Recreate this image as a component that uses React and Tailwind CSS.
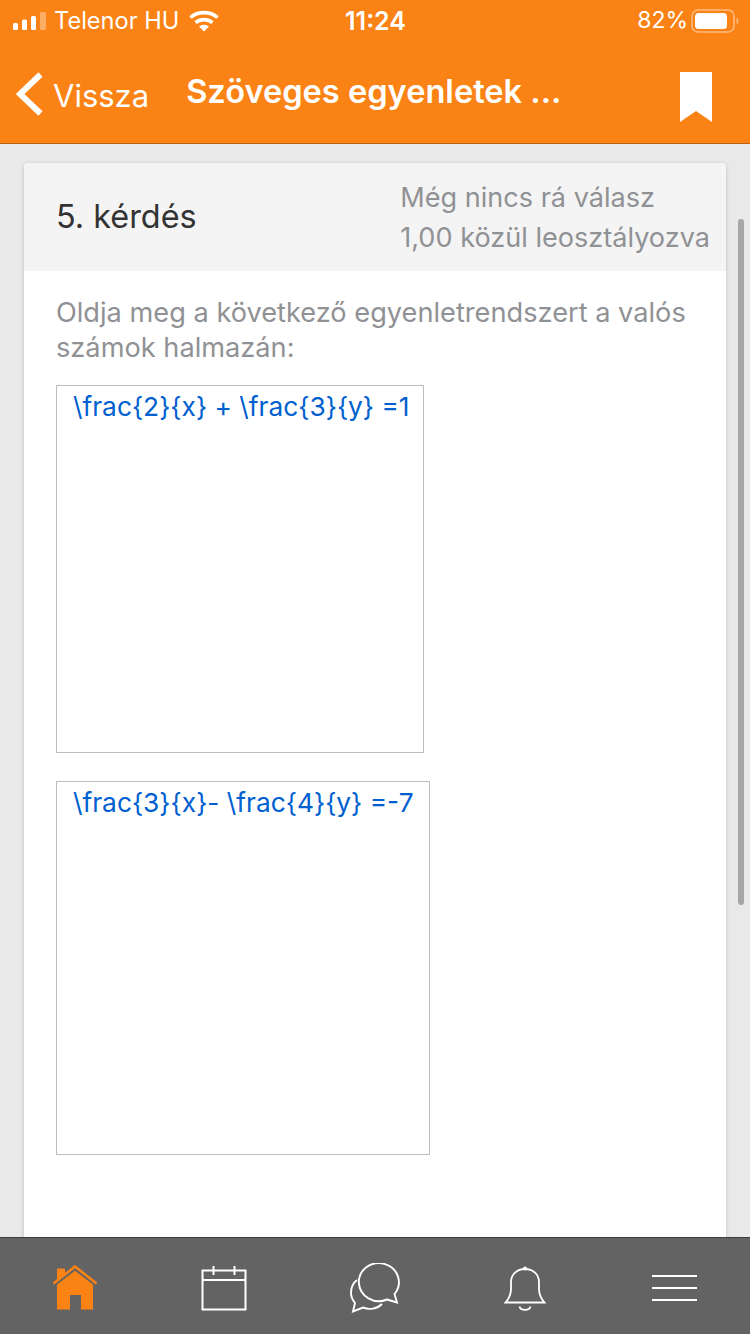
const font = { fontFamily: "Inter, 'Noto Sans', sans-serif" };

function Signal() {
  return (
    <svg width="34" height="18" viewBox="0 0 34 18" fill="#fff">
      <rect x="0" y="11" width="5" height="7" rx="1.5" />
      <rect x="9" y="7.5" width="5" height="10.5" rx="1.5" />
      <rect x="18" y="4" width="5" height="14" rx="1.5" />
      <rect x="27" y="0" width="6" height="18" rx="1.5" opacity="0.35" />
    </svg>
  );
}

function Wifi() {
  return (
    <svg width="30" height="22" viewBox="0 0 30 22" fill="none" stroke="#fff" strokeWidth="3.6">
      <path d="M1.500 7.500C9 1 21 1 28.500 7.500" />
      <path d="M6.500 12.600C11.500 8.600 18.500 8.600 23.500 12.600" />
      <path d="M15 21.500l-5-5c3-2.200 7-2.200 10 0z" fill="#fff" stroke="none" />
    </svg>
  );
}

function Battery() {
  return (
    <svg width="48" height="24" viewBox="0 0 48 24" fill="none">
      <rect x="1" y="1" width="42" height="22" rx="6" stroke="#fff" strokeOpacity="0.45" strokeWidth="1.6" />
      <rect x="4" y="4" width="32" height="16" rx="3.5" fill="#fff" />
      <path d="M45.500 8.500c1.500.6 2 2 2 3.500s-.5 2.900-2 3.500z" fill="#fff" fillOpacity="0.45" />
    </svg>
  );
}

function Home() {
  return (
    <svg width="46" height="46" viewBox="0 0 46 46">
      <path d="M1.500 18.500L23 1.500l21.500 17" fill="none" stroke="#fb8215" strokeWidth="2.600" />
      <path d="M5 3.500h8v6.500l-8 6.300z" fill="#fb8215" />
      <path d="M23 5.800L41 19.600V44.500H29V30H18V44.500H5V19.600z" fill="#fb8215" />
    </svg>
  );
}

function Calendar() {
  return (
    <svg width="46" height="46" viewBox="0 0 46 46" fill="none" stroke="#fff" strokeWidth="2">
      <rect x="1.500" y="5.500" width="43" height="39" />
      <path d="M1.500 15h43M12.500 1v9M33.500 1v9" />
    </svg>
  );
}

function Chat() {
  return (
    <svg width="50" height="50" viewBox="0 0 50 50" fill="none" stroke="#fff" strokeWidth="1.900">
      <path d="M37 36.500L47 39.500L44.500 31A20 19 0 1 0 37 36.500z" />
      <path d="M7 17C3 20 1 25 1 30C1 34 2.500 37 5 40L3 48.500L13 44.500C19 47 27 46 32 41" />
    </svg>
  );
}

function Bell() {
  return (
    <svg width="42" height="46" viewBox="0 0 42 46" fill="none" stroke="#fff" strokeWidth="1.800">
      <path d="M1.500 37.500H40.500C36.500 33 35 29.500 35 24V17C35 9.500 29 4 21 4S7 9.500 7 17V24C7 29.500 5.500 33 1.500 37.500z" />
      <circle cx="21" cy="3.500" r="2" fill="#fff" stroke="none" />
      <path d="M15.500 41.500C16.500 46 25.500 46 26.500 41.500" />
    </svg>
  );
}

function Menu() {
  return (
    <div className="flex w-[45px] flex-col gap-[10px]">
      <div className="h-[2px] bg-white" />
      <div className="h-[2px] bg-white" />
      <div className="h-[2px] bg-white" />
    </div>
  );
}

function FormulaBox({ text, width, height, className = "" }) {
  return (
    <div
      className={`border border-[#bdbdbd] pl-[16px] pt-[3px] text-[26.300px] leading-[36px] text-[#0060d0] ${className}`}
      style={{ width, height }}
    >
      {text}
    </div>
  );
}

export default function App() {
  return (
    <div className="relative flex h-[1334px] w-[750px] flex-col overflow-hidden bg-[#e9e9e9]" style={font}>
      <header className="h-[144px] shrink-0 border-b border-[#b9620f] bg-[#fb8215] text-white">
        <div className="relative flex h-[40px] items-center pl-[13px] pr-[11px] pt-[1px]">
          <Signal />
          <span className="ml-[7px] text-[23.600px] leading-none">Telenor HU</span>
          <span className="ml-[10px]"><Wifi /></span>
          <span className="absolute left-[345px] top-[8px] text-[25px] font-semibold leading-[26px]">11:24</span>
          <span className="ml-auto mr-[3px] text-[23px] leading-none">82%</span>
          <Battery />
        </div>
        <div className="flex h-[103px] items-start">
          <svg className="ml-[16px] mt-[32px]" width="27" height="44" viewBox="0 0 27 44" fill="none" stroke="#fff" strokeWidth="6">
            <path d="M24.500 2.500L4 22l20.500 19.500" />
          </svg>
          <span className="ml-[10px] mt-[36px] text-[31px] leading-[40px]">Vissza</span>
          <span className="ml-[37px] mt-[31px] text-[32.600px] font-semibold leading-[40px]">Szöveges egyenletek ...</span>
          <svg className="ml-auto mr-[38px] mt-[32px]" width="32" height="50" viewBox="0 0 32 50" fill="#fff">
            <path d="M0 0H32V50L16 39 0 50z" />
          </svg>
        </div>
      </header>

      <main className="min-h-0 flex-1 px-[24px] pt-[19px]">
        <div className="h-[1200px] overflow-hidden rounded-[4px] bg-white shadow-[0_1px_4px_rgba(0,0,0,0.18)]">
          <div className="flex h-[108px] items-center justify-between bg-[#f4f4f4] pl-[32px] pr-[16px]">
            <span className="text-[32.400px] leading-[40px] text-[#333333]">5. kérdés</span>
            <div className="pt-[2px] text-[27.100px] leading-[40px] text-[#909194]">
              <div>Még nincs rá válasz</div>
              <div>1,00 közül leosztályozva</div>
            </div>
          </div>
          <div className="px-[32px] pt-[24px]">
            <p className="text-[27.200px] leading-[35px] text-[#909194]">
              Oldja meg a következő egyenletrendszert a valós számok halmazán:
            </p>
            <FormulaBox className="mt-[20px]" width={368} height={368} text={"\\frac{2}{x} + \\frac{3}{y} =1"} />
            <FormulaBox className="mt-[28px]" width={374} height={374} text={"\\frac{3}{x}- \\frac{4}{y} =-7"} />
          </div>
        </div>
      </main>

      <div className="absolute left-[738px] top-[219px] h-[686px] w-[6px] rounded-full bg-[#a6a6a6]" />

      <nav className="absolute bottom-0 left-0 flex h-[97px] w-full items-center border-t border-[#3d3d3d] bg-[#636363] pt-[4px]">
        <div className="flex w-[150px] justify-center"><Home /></div>
        <div className="flex w-[150px] justify-center pr-[2px]"><Calendar /></div>
        <div className="flex w-[150px] justify-center"><Chat /></div>
        <div className="flex w-[150px] justify-center"><Bell /></div>
        <div className="flex w-[150px] justify-center pr-[2px]"><Menu /></div>
      </nav>
    </div>
  );
}
